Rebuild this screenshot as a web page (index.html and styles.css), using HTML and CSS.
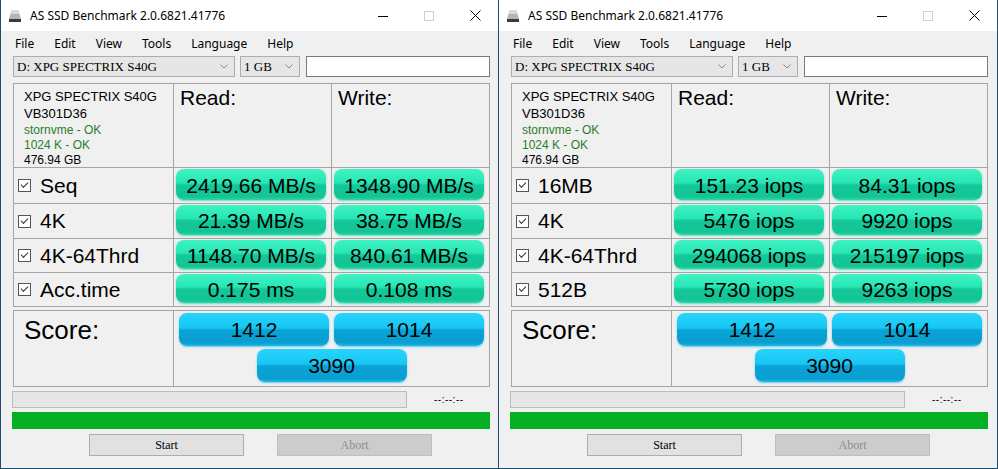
FILE: index.html
```html
<!DOCTYPE html>
<html lang="en">
<head>
    <meta charset="UTF-8">
    <title>AS SSD Benchmark</title>
    <link rel="stylesheet" href="styles.css">
</head>
<body>
<div class="desktop">

    <!-- left window: MB/s -->
    <div class="window">
        <div class="titlebar">
            <svg class="app-icon" width="14" height="14" viewBox="0 0 14 14"><path d="M3.5 1.5h7l2.5 8.5H1z" fill="#b5b5b5"/><path d="M3.5 1.5h7l1 3.5H2.5z" fill="#d8d8d8"/><rect x="1" y="10" width="12" height="3" fill="#3a3a3a"/></svg>
            <span class="title">AS SSD Benchmark 2.0.6821.41776</span>
            <div class="controls">
                <span class="ctl"><svg width="10" height="10"><path d="M0 5.5h10" stroke="#000"/></svg></span>
                <span class="ctl"><svg width="10" height="10"><rect x=".5" y=".5" width="9" height="9" fill="none" stroke="#cfcfcf"/></svg></span>
                <span class="ctl"><svg width="11" height="11"><path d="M.5 .5l10 10M10.5 .5l-10 10" stroke="#000"/></svg></span>
            </div>
        </div>
        <div class="menubar">
            <span>File</span><span>Edit</span><span>View</span><span>Tools</span><span>Language</span><span>Help</span>
        </div>
        <div class="content">
            <div class="toolbar">
                <div class="select drive"><span>D: XPG SPECTRIX S40G</span><svg width="8" height="5"><path d="M.5 .5l3.5 3.5 3.5-3.5" fill="none" stroke="#888"/></svg></div>
                <div class="select size"><span>1 GB</span><svg width="8" height="5"><path d="M.5 .5l3.5 3.5 3.5-3.5" fill="none" stroke="#888"/></svg></div>
                <div class="textbox"></div>
            </div>

            <div class="results">
                <div class="info">
                    <div class="big">XPG SPECTRIX S40G</div>
                    <div class="big">VB301D36</div>
                    <div class="ok">stornvme - OK</div>
                    <div class="ok">1024 K - OK</div>
                    <div>476.94 GB</div>
                </div>
                <div class="head">Read:</div>
                <div class="head">Write:</div>

                <div class="label"><span class="check"></span>Seq</div>
                <div class="cell"><div class="bar">2419.66 MB/s</div></div>
                <div class="cell"><div class="bar">1348.90 MB/s</div></div>

                <div class="label"><span class="check"></span>4K</div>
                <div class="cell"><div class="bar">21.39 MB/s</div></div>
                <div class="cell"><div class="bar">38.75 MB/s</div></div>

                <div class="label"><span class="check"></span>4K-64Thrd</div>
                <div class="cell"><div class="bar">1148.70 MB/s</div></div>
                <div class="cell"><div class="bar">840.61 MB/s</div></div>

                <div class="label"><span class="check"></span>Acc.time</div>
                <div class="cell"><div class="bar">0.175 ms</div></div>
                <div class="cell"><div class="bar">0.108 ms</div></div>
            </div>

            <div class="score">
                <div class="score-label">Score:</div>
                <div class="score-values">
                    <div class="sbar">1412</div>
                    <div class="sbar">1014</div>
                    <div class="sbar">3090</div>
                </div>
            </div>

            <div class="progress-row">
                <div class="progress"></div>
                <span class="time">--:--:--</span>
            </div>
            <div class="done-bar"></div>
            <div class="buttons">
                <div class="btn">Start</div>
                <div class="btn disabled">Abort</div>
            </div>
        </div>
    </div>

    <!-- right window: iops -->
    <div class="window">
        <div class="titlebar">
            <svg class="app-icon" width="14" height="14" viewBox="0 0 14 14"><path d="M3.5 1.5h7l2.5 8.5H1z" fill="#b5b5b5"/><path d="M3.5 1.5h7l1 3.5H2.5z" fill="#d8d8d8"/><rect x="1" y="10" width="12" height="3" fill="#3a3a3a"/></svg>
            <span class="title">AS SSD Benchmark 2.0.6821.41776</span>
            <div class="controls">
                <span class="ctl"><svg width="10" height="10"><path d="M0 5.5h10" stroke="#000"/></svg></span>
                <span class="ctl"><svg width="10" height="10"><rect x=".5" y=".5" width="9" height="9" fill="none" stroke="#cfcfcf"/></svg></span>
                <span class="ctl"><svg width="11" height="11"><path d="M.5 .5l10 10M10.5 .5l-10 10" stroke="#000"/></svg></span>
            </div>
        </div>
        <div class="menubar">
            <span>File</span><span>Edit</span><span>View</span><span>Tools</span><span>Language</span><span>Help</span>
        </div>
        <div class="content">
            <div class="toolbar">
                <div class="select drive"><span>D: XPG SPECTRIX S40G</span><svg width="8" height="5"><path d="M.5 .5l3.5 3.5 3.5-3.5" fill="none" stroke="#888"/></svg></div>
                <div class="select size"><span>1 GB</span><svg width="8" height="5"><path d="M.5 .5l3.5 3.5 3.5-3.5" fill="none" stroke="#888"/></svg></div>
                <div class="textbox"></div>
            </div>

            <div class="results">
                <div class="info">
                    <div class="big">XPG SPECTRIX S40G</div>
                    <div class="big">VB301D36</div>
                    <div class="ok">stornvme - OK</div>
                    <div class="ok">1024 K - OK</div>
                    <div>476.94 GB</div>
                </div>
                <div class="head">Read:</div>
                <div class="head">Write:</div>

                <div class="label"><span class="check"></span>16MB</div>
                <div class="cell"><div class="bar">151.23 iops</div></div>
                <div class="cell"><div class="bar">84.31 iops</div></div>

                <div class="label"><span class="check"></span>4K</div>
                <div class="cell"><div class="bar">5476 iops</div></div>
                <div class="cell"><div class="bar">9920 iops</div></div>

                <div class="label"><span class="check"></span>4K-64Thrd</div>
                <div class="cell"><div class="bar">294068 iops</div></div>
                <div class="cell"><div class="bar">215197 iops</div></div>

                <div class="label"><span class="check"></span>512B</div>
                <div class="cell"><div class="bar">5730 iops</div></div>
                <div class="cell"><div class="bar">9263 iops</div></div>
            </div>

            <div class="score">
                <div class="score-label">Score:</div>
                <div class="score-values">
                    <div class="sbar">1412</div>
                    <div class="sbar">1014</div>
                    <div class="sbar">3090</div>
                </div>
            </div>

            <div class="progress-row">
                <div class="progress"></div>
                <span class="time">--:--:--</span>
            </div>
            <div class="done-bar"></div>
            <div class="buttons">
                <div class="btn">Start</div>
                <div class="btn disabled">Abort</div>
            </div>
        </div>
    </div>

</div>
</body>
</html>
```

FILE: styles.css
```css
body { margin: 0; font-family: "Liberation Sans", Arial, sans-serif; color: #000; }
.desktop { display: flex; width: 998px; height: 469px; overflow: hidden; }

/* window chrome */
.window { width: 499px; height: 469px; box-sizing: border-box; border: 1px solid #1f4d6e; border-top: none; background: #f0f0f0; display: flex; flex-direction: column; }
.window + .window { border-left: none; }
.titlebar { height: 31px; background: #fff; display: flex; align-items: center; font-family: "Noto Sans", sans-serif; font-size: 12px; }
.app-icon { margin: 0 8px 0 7px; }
.title { color: #000; }
.controls { margin-left: auto; display: flex; height: 100%; }
.ctl { width: 46px; display: flex; align-items: center; justify-content: center; }

.menubar { height: 24px; display: flex; align-items: center; padding-left: 4px; font-family: "Noto Sans", sans-serif; font-size: 12px; }
.menubar span { padding: 0 10px; }

.content { padding: 0 8px 0 12px; }

/* drive / size selection */
.toolbar { display: flex; margin-top: 1px; height: 21px; }
.select { box-sizing: border-box; height: 21px; border: 1px solid #adadad; background: #e6e6e6; display: flex; align-items: center; justify-content: space-between; padding: 0 6px 0 3px; font-family: "Liberation Serif", serif; font-size: 13px; }
.drive { width: 222px; }
.size { width: 60px; margin-left: 5px; }
.textbox { box-sizing: border-box; width: 184px; height: 21px; margin-left: 6px; border: 1px solid #7a7a7a; background: #fff; }

/* result table */
.results { margin-top: 6px; display: grid; grid-template-columns: 159px 157px 157px; grid-template-rows: 83px 35px 34px 33px 33px; gap: 1px; background: #a5a5a5; border: 1px solid #a5a5a5; width: 475px; }
.results > div { background: #f0f0f0; }
.info { padding: 4px 0 0 10px; font-size: 12px; line-height: 15px; }
.info .big { font-size: 13px; line-height: 17px; }
.info .big + .big { margin-bottom: 1px; }
.ok { color: #2a7d2a; }
.head { font-size: 21px; padding: 2px 0 0 6px; }
.label { display: flex; align-items: center; font-size: 21px; padding-left: 4px; }
.check { width: 11px; height: 11px; border: 1px solid #555; margin-right: 9px; position: relative; background: #fff; }
.check::after { content: ""; position: absolute; left: 2px; top: 2px; width: 6px; height: 3px; border-left: 1px solid #333; border-bottom: 1px solid #333; transform: rotate(-45deg); }
.cell { padding: 1px 5px 3px 2px; }
.bar { height: 100%; border-radius: 8px; display: flex; align-items: center; justify-content: center; padding-top: 2px; box-sizing: border-box; font-size: 21px; background: linear-gradient(#3ff2c4 0%, #27e6b3 45%, #14c89a 52%, #13c495 90%, #2ad9ab 100%); box-shadow: 0 1px 2px rgba(30, 200, 150, .6); }

/* score */
.score { margin-top: 3px; display: grid; grid-template-columns: 159px 315px; grid-template-rows: 75px; gap: 1px; background: #a5a5a5; border: 1px solid #a5a5a5; width: 475px; }
.score > div { background: #f0f0f0; }
.score-label { font-size: 26px; padding: 4px 0 0 10px; }
.score-values { display: flex; flex-wrap: wrap; justify-content: center; align-content: flex-start; gap: 3px 5px; padding-top: 2px; }
.sbar { width: 150px; height: 33px; border-radius: 8px; display: flex; align-items: center; justify-content: center; font-size: 21px; background: linear-gradient(#26d4fd 0%, #17c6f3 45%, #0aa3d6 52%, #0a9ed0 90%, #1bbbe8 100%); box-shadow: 0 1px 2px rgba(20, 170, 230, .6); }

/* progress + buttons */
.progress-row { display: flex; align-items: center; margin: 4px 0 0 -1px; height: 17px; }
.progress { box-sizing: border-box; width: 395px; height: 17px; background: #e6e6e6; border: 1px solid #bcbcbc; }
.time { margin-left: 27px; font-size: 10px; color: #000; letter-spacing: 0.5px; }
.done-bar { margin: 4px 0 0 -1px; width: 478px; height: 17px; background: #06b025; }
.buttons { display: flex; margin: 5px 0 0 76px; gap: 33px; }
.btn { box-sizing: border-box; width: 155px; height: 22px; border: 1px solid #adadad; background: #e1e1e1; display: flex; align-items: center; justify-content: center; font-family: "Liberation Serif", serif; font-size: 12px; }
.btn.disabled { background: #cccccc; border-color: #bfbfbf; color: #8d8d8d; }
```
